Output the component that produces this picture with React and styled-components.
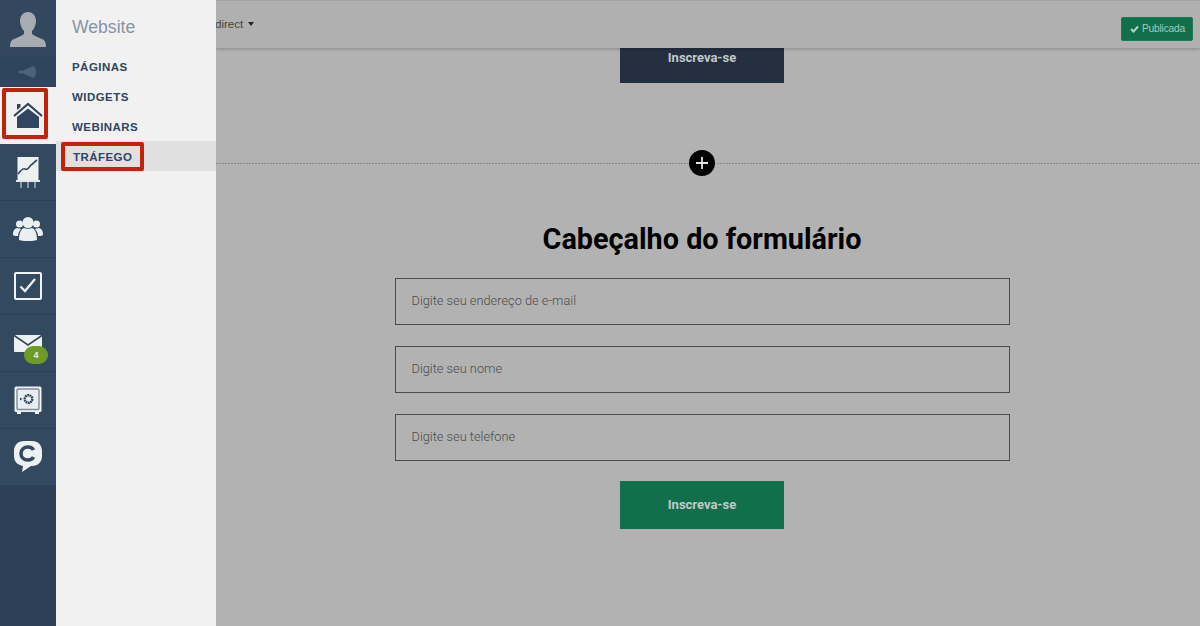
import styled, { createGlobalStyle } from 'styled-components';

const GlobalStyle = createGlobalStyle`
  html, body {
    margin: 0;
    height: 100%;
    overflow: hidden;
    font-family: 'Roboto', 'Liberation Sans', sans-serif;
  }
  * { box-sizing: border-box; }
`;

const Shell = styled.div`
  display: flex;
  width: 1200px;
  height: 626px;
  overflow: hidden;
  background: #b2b2b2;
`;

const Sidebar = styled.aside`
  width: 56px;
  flex: none;
  display: flex;
  flex-direction: column;
  background: #2e4056;
`;

const Avatar = styled.div`
  height: 57px;
  display: flex;
  align-items: center;
  justify-content: center;
  background: #33485f;
`;

const Speaker = styled.div`
  height: 30px;
  display: flex;
  align-items: center;
  justify-content: center;
  background: #2f455d;
`;

const NavItem = styled.div`
  position: relative;
  height: 57px;
  display: flex;
  align-items: center;
  justify-content: center;
  background: ${(p) => (p.active ? '#f1f1f1' : '#33495f')};
  border-bottom: 1px solid ${(p) => (p.active ? '#f1f1f1' : '#2d4157')};
`;

const Badge = styled.span`
  position: absolute;
  left: 24px;
  top: 31px;
  width: 24px;
  height: 18px;
  border-radius: 9px;
  background: #6f9a26;
  color: #eef2e6;
  font: bold 9px/18px 'Liberation Sans', sans-serif;
  text-align: center;
`;

const Highlight = styled.div`
  position: absolute;
  border: 4px solid #bf2408;
  border-radius: 2px;
  left: ${(p) => p.x}px;
  top: ${(p) => p.y}px;
  width: ${(p) => p.w}px;
  height: ${(p) => p.ht}px;
`;

const Panel = styled.nav`
  position: relative;
  width: 160px;
  flex: none;
  background: #f1f1f1;
  z-index: 3;
`;

const PanelTitle = styled.div`
  height: 51px;
  padding: 16px 0 0 16px;
  font: 17.6px/22px 'Liberation Sans', sans-serif;
  color: #8595a6;
`;

const PanelLink = styled.div`
  height: 30px;
  padding-left: ${(p) => (p.active ? 17 : 16)}px;
  font: bold 11.5px/32px 'Liberation Sans', sans-serif;
  letter-spacing: 0.45px;
  color: #2f4560;
  background: ${(p) => (p.active ? '#e0e0e0' : 'transparent')};
`;

const Main = styled.main`
  position: relative;
  flex: 1;
  min-width: 0;
  overflow: hidden;
`;

const TopBar = styled.header`
  position: relative;
  z-index: 2;
  height: 48px;
  display: flex;
  align-items: center;
  justify-content: space-between;
  padding: 0 7px 0 0;
  background: #b0b0b0;
  border-top: 1px solid #a4a4a4;
  box-shadow: 0 1px 3px rgba(0, 0, 0, 0.25);
`;

const Redirect = styled.div`
  display: flex;
  align-items: center;
  gap: 5px;
  margin: -2px 0 0 -1px;
  font: 11.5px/14px 'Liberation Sans', sans-serif;
  color: #444;
`;

const Caret = styled.i`
  width: 0;
  height: 0;
  border-left: 3.5px solid transparent;
  border-right: 3.5px solid transparent;
  border-top: 4px solid #222;
`;

const Published = styled.div`
  display: flex;
  align-items: center;
  gap: 3px;
  width: 72px;
  height: 24px;
  margin-top: 8px;
  padding-left: 8px;
  border-radius: 2px;
  border: 1px solid #1a7a54;
  background: #116f4b;
  color: #a9c6b9;
  font: 10.2px/12px 'Liberation Sans', sans-serif;
  letter-spacing: -0.2px;
`;

const Canvas = styled.div`
  display: flex;
  flex-direction: column;
  align-items: center;
  padding-right: 12px;
  margin-top: -13.5px;
`;

const SubmitButton = styled.div`
  width: 164px;
  height: 48px;
  flex: none;
  text-align: center;
  font: bold 13px/${(p) => p.lh || 48}px 'Roboto', sans-serif;
  color: #c2c8cc;
  background: ${(p) => p.bg};
`;

const Divider = styled.div`
  position: relative;
  align-self: stretch;
  height: 1px;
  margin: 80.5px -12px 0 0;
  background: repeating-linear-gradient(to right, #8a8a8a 0 2px, transparent 2px 3px);
`;

const AddButton = styled.div`
  position: absolute;
  left: 473px;
  top: -13px;
  width: 26px;
  height: 26px;
  display: flex;
  align-items: center;
  justify-content: center;
  border-radius: 50%;
  background: #000;
`;

const Form = styled.form`
  display: flex;
  flex-direction: column;
  align-items: center;
  width: 615px;
  margin-top: 57px;
`;

const FormTitle = styled.h2`
  margin: 0 0 21px;
  font: bold 28.8px/36px 'Roboto', sans-serif;
  color: #000;
`;

const FieldList = styled.div`
  display: grid;
  gap: 21px;
  width: 100%;
  margin-bottom: 20px;
`;

const Field = styled.div`
  height: 47px;
  padding-left: 16px;
  border: 1px solid #4c4c4c;
  font: 300 12.8px/44px 'Roboto', sans-serif;
  color: #4c4c4c;
`;

const links = ['PÁGINAS', 'WIDGETS', 'WEBINARS'];
const fields = ['Digite seu endereço de e-mail', 'Digite seu nome', 'Digite seu telefone'];

function UserIcon() {
  return (
    <svg width="38" height="36" viewBox="0 0 38 36" fill="#a6acb2">
      <path d="M19 1c5 0 8 4 8 9 0 4-2 8-4 10v3c2 2 6 3 10 5 3 1 4 4 4 8H1c0-4 1-7 4-8 4-2 8-3 10-5v-3c-2-2-4-6-4-10 0-5 3-9 8-9z" />
    </svg>
  );
}

function SpeakerIcon() {
  return (
    <svg width="18" height="12" viewBox="0 0 18 12" fill="#4a6480">
      <path d="M0 4.500h5v3H0zM5 4l9-4c1 0 3 2 3 6s-2 6-3 6L5 8z" />
    </svg>
  );
}

function HomeIcon() {
  return (
    <svg width="30" height="30" viewBox="0 0 30 30" fill="#2f4560">
      <path d="M15 8.500 26 17v11H4V17z" />
      <path d="M1 16 15 4l14 12" fill="none" stroke="#2f4560" strokeWidth="2.200" />
      <path d="M4 4h3.500v3L4 10z" />
    </svg>
  );
}

function ChartIcon() {
  return (
    <svg width="24" height="32" viewBox="0 0 24 32">
      <path d="M1.500 1h21v23h-21z" fill="#eef1f2" />
      <path d="M2 18c3-4 5-6 7-5s3 0 6-4c2-1 3-3 6-5" fill="none" stroke="#33495f" strokeWidth="1.600" />
      <path d="M0 25h24" stroke="#e6e9ea" strokeWidth="2" />
      <path d="M5 26v6M12 26v6M19 26v6" stroke="#c8ced2" strokeWidth="1.200" />
    </svg>
  );
}

function PeopleIcon() {
  return (
    <svg width="30" height="24" viewBox="0 0 30 24" fill="#eceff1">
      <circle cx="15" cy="5.500" r="5.500" />
      <path d="M6 23c0-7 2-11 5-12 2 1 6 1 8 0 3 1 5 5 5 12-3 1.500-15 1.500-18 0z" />
      <circle cx="6.500" cy="7" r="3.500" />
      <circle cx="23.500" cy="7" r="3.500" />
      <path d="M0 18c0-4 1-6 4-7l4 1c-2 2-3 5-3 7-2 0-4 0-5-1zM30 18c0-4-1-6-4-7l-4 1c2 2 3 5 3 7 2 0 4 0 5-1z" />
    </svg>
  );
}

function CheckIcon() {
  return (
    <svg width="28" height="28" viewBox="0 0 28 28" fill="none">
      <rect x="1" y="1" width="26" height="26" rx="1" stroke="#f0f2f3" strokeWidth="2" />
      <path d="M6.500 14.500 11 19l10-12" stroke="#f0f2f3" strokeWidth="2.200" />
    </svg>
  );
}

function MailIcon() {
  return (
    <svg width="28" height="17" viewBox="0 0 28 17" fill="#eef1f2">
      <path d="M1 0h26L14 9z" />
      <path d="M0 1.500 14 11 28 1.500V16c0 .6-.4 1-1 1H1c-.6 0-1-.4-1-1z" />
    </svg>
  );
}

function SafeIcon() {
  return (
    <svg width="28" height="28" viewBox="0 0 28 28">
      <rect x="0.500" y="0.500" width="27" height="25.500" rx="1.500" fill="#f0f2f3" />
      <path d="M3 26h4v2H3zM21 26h4v2h-4z" fill="#f0f2f3" />
      <rect x="3" y="3" width="22" height="20.500" rx="1" fill="#e9edef" stroke="#7f8e9d" strokeWidth="1.400" />
      <circle cx="14.500" cy="13" r="3.800" fill="none" stroke="#33495f" strokeWidth="2.400" strokeDasharray="1.800 .5" />
      <path d="M6 11.500 8.500 13 6 14.500z" fill="#33495f" />
    </svg>
  );
}

function ChatIcon() {
  return (
    <svg width="28" height="32" viewBox="0 0 28 32">
      <path d="M10 0h8c6 0 10 4 10 10v5c0 6-4 10-10 10h-1l-9 6 1-6c-5-1-9-4-9-10v-5C0 4 4 0 10 0z" fill="#eef1f2" />
      <path d="M19.500 9c-1-2-3-3-5.500-3-4 0-7 2.500-7 6.500s3 6.500 7 6.500c2.500 0 4.500-1 5.500-3" fill="none" stroke="#33495f" strokeWidth="3.600" />
    </svg>
  );
}

function TickIcon() {
  return (
    <svg width="9" height="8" viewBox="0 0 9 8" fill="none">
      <path d="M1 4 3.500 6.500 8 1.500" stroke="#b9d2c6" strokeWidth="2" />
    </svg>
  );
}

function PlusIcon() {
  return (
    <svg width="14" height="14" viewBox="0 0 14 14">
      <path d="M7 1v12M1 7h12" stroke="#e4e4e4" strokeWidth="1.800" />
    </svg>
  );
}

export default function App() {
  return (
    <Shell>
      <GlobalStyle />
      <Sidebar>
        <Avatar>
          <UserIcon />
        </Avatar>
        <Speaker>
          <SpeakerIcon />
        </Speaker>
        <NavItem active>
          <HomeIcon />
          <Highlight x={2} y={1} w={46} ht={51} />
        </NavItem>
        <NavItem>
          <ChartIcon />
        </NavItem>
        <NavItem>
          <PeopleIcon />
        </NavItem>
        <NavItem>
          <CheckIcon />
        </NavItem>
        <NavItem>
          <MailIcon />
          <Badge>4</Badge>
        </NavItem>
        <NavItem>
          <SafeIcon />
        </NavItem>
        <NavItem>
          <ChatIcon />
        </NavItem>
      </Sidebar>
      <Panel>
        <PanelTitle>Website</PanelTitle>
        {links.map((label) => (
          <PanelLink key={label}>{label}</PanelLink>
        ))}
        <PanelLink active>TRÁFEGO</PanelLink>
        <Highlight x={5} y={142} w={83} ht={29} />
      </Panel>
      <Main>
        <TopBar>
          <Redirect>
            direct
            <Caret />
          </Redirect>
          <Published>
            <TickIcon />
            Publicada
          </Published>
        </TopBar>
        <Canvas>
          <SubmitButton bg="#243040" lh={46}>Inscreva-se</SubmitButton>
          <Divider>
            <AddButton>
              <PlusIcon />
            </AddButton>
          </Divider>
          <Form>
            <FormTitle>Cabeçalho do formulário</FormTitle>
            <FieldList>
              {fields.map((label) => (
                <Field key={label}>{label}</Field>
              ))}
            </FieldList>
            <SubmitButton bg="#116f4b">Inscreva-se</SubmitButton>
          </Form>
        </Canvas>
      </Main>
    </Shell>
  );
}
